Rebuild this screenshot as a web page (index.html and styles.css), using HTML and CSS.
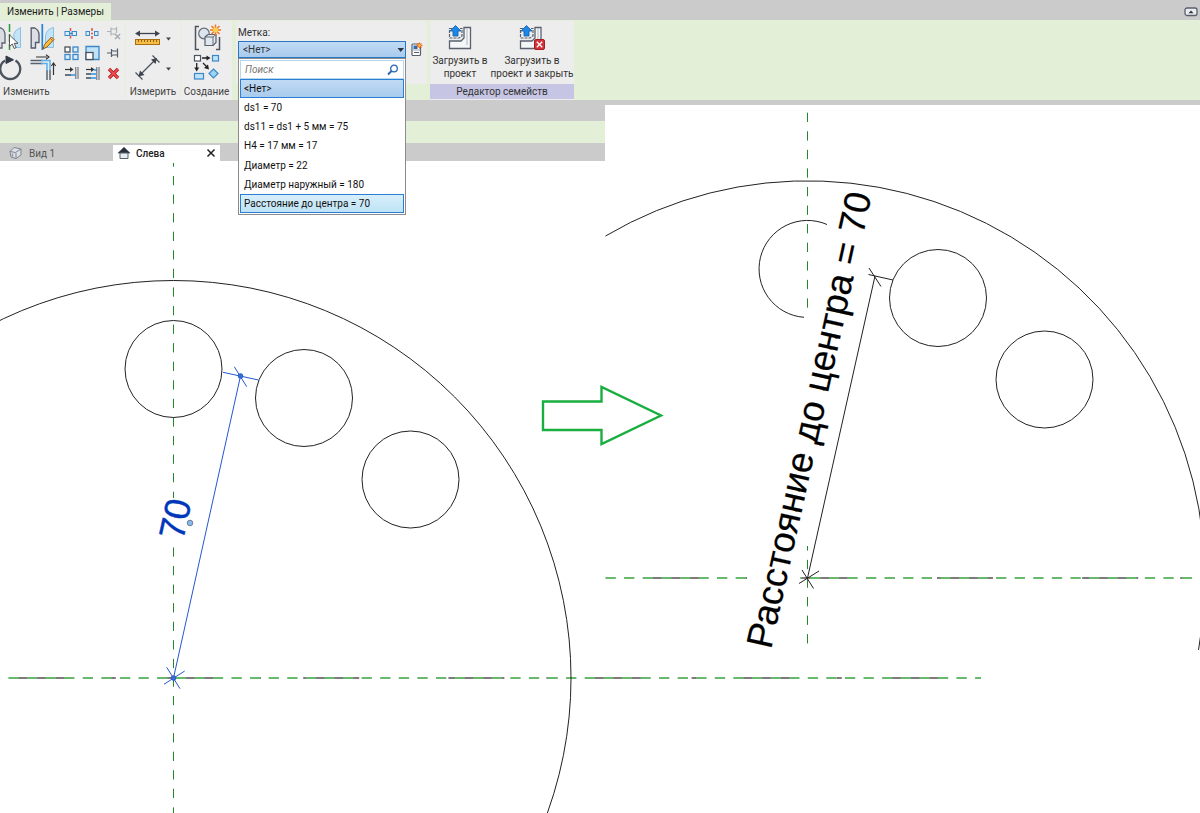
FILE: index.html
```html
<!DOCTYPE html>
<html lang="ru">
<head>
<meta charset="utf-8">
<title>Изменить | Размеры</title>
<link rel="stylesheet" href="styles.css">
</head>
<body>
<header>
  <div class="titlebar">
    <button class="ribbon-tab">Изменить | Размеры</button>
    <button class="collapse" aria-label="Свернуть ленту">
      <svg width="14" height="10" viewBox="0 0 14 10"><rect x="1" y="1" width="12" height="7.500" rx="2" fill="#e9edf2" stroke="#59606b" stroke-width="1.300"/><path d="M4.500 6.200h5L7 3.500z" fill="#333"/></svg>
    </button>
  </div>

  <div class="ribbon">
    <section class="panel modify">
      <div class="tools">
        <div class="big-grid">
          <button class="tool" aria-label="Зеркало по оси"><svg width="28" height="30" viewBox="0 23 28 30">
            <path d="M-3 28h4q4 2 4 7v8H2v5h-5z" fill="#d9dce2" stroke="#5d6572" stroke-width="1.300"/>
            <path d="M20.500 27.500v20h-6v-8l-1-5q2-5 7-7z" fill="#c3e3f7" stroke="#8cc0e6"/>
            <path d="M9.500 24v26" stroke="#2e9b3e" stroke-width="1.500" stroke-dasharray="8 2"/>
            <path d="M9.500 35v11.500l2.700-2.500 2 4.500 2-1-2-4.200h3.800z" fill="#fff" stroke="#444" stroke-width=".9"/></svg></button>
          <button class="tool" aria-label="Зеркало по линии"><svg width="32" height="30" viewBox="28 23 32 30">
            <path d="M31.200 28h3.500q4.300 2 4.300 7v7.500h-3.500v5.500h-4.300z" fill="#dcdfe5" stroke="#535b68" stroke-width="1.300"/>
            <path d="M53.500 27.500v20h-8V36q1-7 8-8.500z" fill="#c3e3f7" stroke="#8cc0e6"/>
            <path d="M42.300 24v26" stroke="#2584d8" stroke-width="1.700"/>
            <path d="M43 49l1.500-4.500 7-7.500 2.500 2.500-7 7.500z" fill="#f8bf3f" stroke="#8a5a18" stroke-width="1"/><path d="M50.300 38.300l2.500 2.500" stroke="#dc4d4d"/></svg></button>
          <button class="tool" aria-label="Повернуть"><svg width="28" height="30" viewBox="0 53 28 30">
            <path d="M15.500 60.500A10 10 0 1 1 5 60.500" fill="none" stroke="#4b535f" stroke-width="2.300"/>
            <path d="M6 56l7.500 3.800L6 63.500z" fill="#333a45" stroke="#333a45"/></svg></button>
          <button class="tool" aria-label="Обрезать до угла"><svg width="32" height="30" viewBox="28 53 32 30">
            <path d="M30.500 60.500h12M30.500 63.500h12M47 70v10M50 70v10" stroke="#59616d" stroke-width="1.500"/>
            <path d="M41 60.500h9v10M41 63.500h6v7" fill="none" stroke="#5aaeea" stroke-width="1.500"/>
            <path d="M36 57h11M53.500 75V63.500" stroke="#333" stroke-width="1.200"/><path d="M46 54.800l3 2.200-3 2.200M51.300 66l2.200-3 2.200 3" fill="none" stroke="#333" stroke-width="1.100"/></svg></button>
        </div>
        <div class="small-grid">
          <button class="tool" aria-label="Разделить элемент"><svg width="21" height="20" viewBox="60 23 21 20"><path d="M70.500 28v3M70.500 35.500v3" stroke="#da5348" stroke-width="1.500"/><rect x="65" y="31.500" width="4.500" height="4" fill="#d9efff" stroke="#3f88c8"/><rect x="72" y="31.500" width="4.500" height="4" fill="#d9efff" stroke="#3f88c8"/><path d="M69 33.500h4" stroke="#3f88c8" stroke-width="1.500"/></svg></button>
          <button class="tool" aria-label="Разделить с зазором"><svg width="21" height="20" viewBox="81 23 21 20"><path d="M92 28v3M92 36v3" stroke="#da5348" stroke-width="1.500"/><circle cx="92" cy="33.500" r="1" fill="#da5348"/><rect x="86" y="31.500" width="3.500" height="4" fill="#d9efff" stroke="#3f88c8"/><rect x="94.500" y="31.500" width="3.500" height="4" fill="#d9efff" stroke="#3f88c8"/></svg></button>
          <button class="tool" aria-label="Открепить"><svg width="21" height="20" viewBox="102 23 21 20"><path d="M107 31.500h4M111 27.500v8M111 29h5M111 34h5M116.500 27v6" fill="none" stroke="#afb2b6" stroke-width="1.200"/><path d="M115 34l5 5M120 34l-5 5" stroke="#a9acb1" stroke-width="1.600"/></svg></button>
          <button class="tool" aria-label="Массив"><svg width="21" height="20" viewBox="60 43 21 20"><g fill="#d7eefb" stroke="#3d88c6" stroke-width="1.300"><rect x="65" y="47" width="5" height="5" fill="#fff" stroke="#4a515c"/><rect x="73" y="47" width="5" height="5"/><rect x="65" y="54.500" width="5" height="5"/><rect x="73" y="54.500" width="5" height="5"/></g></svg></button>
          <button class="tool" aria-label="Масштаб"><svg width="21" height="20" viewBox="81 43 21 20"><path d="M86 46.500h13v13H86z" fill="#bfe3f7" stroke="#3d88c6" stroke-width="1.300"/><rect x="86" y="52.500" width="7" height="7" fill="#fff" stroke="#4a515c" stroke-width="1.300"/></svg></button>
          <button class="tool" aria-label="Закрепить"><svg width="21" height="20" viewBox="102 43 21 20"><path d="M107 53h4M111.500 49v8M111.500 50.500l2 .5h4M111.500 55.500l2-.5h4M117.500 48.500v9" fill="none" stroke="#555d69" stroke-width="1.200"/></svg></button>
          <button class="tool" aria-label="Удлинить один элемент"><svg width="21" height="20" viewBox="60 63 21 20"><path d="M65 69.500h6" stroke="#333" stroke-width="1.200"/><path d="M70 67l3.500 2.500L70 72z" fill="#333"/><path d="M65 75h6" stroke="#69717d" stroke-width="2"/><path d="M71 75h4.500" stroke="#55abea" stroke-width="2"/><path d="M75.800 67v12M78 67v12" stroke="#5c6470" stroke-width="1"/></svg></button>
          <button class="tool" aria-label="Удлинить несколько элементов"><svg width="21" height="20" viewBox="81 63 21 20"><path d="M86 69.500h6" stroke="#333" stroke-width="1.200"/><path d="M91 67l3.500 2.500L91 72z" fill="#333"/><path d="M86 74h6M86 78h6" stroke="#69717d" stroke-width="2"/><path d="M91 74h5M91 78h5M94 70h3" stroke="#55abea" stroke-width="2"/><path d="M96.800 67v13M99 67v13" stroke="#5c6470" stroke-width="1"/></svg></button>
          <button class="tool" aria-label="Удалить"><svg width="21" height="20" viewBox="102 63 21 20"><path d="M109 69l9 9M118 69l-9 9" stroke="#b61f24" stroke-width="3.300"/><path d="M109 69l9 9M118 69l-9 9" stroke="#ef4f50" stroke-width="1.700"/></svg></button>
        </div>
      </div>
      <h2 class="caption left">Изменить</h2>
    </section>

    <section class="panel measure">
      <div class="tools stack">
        <button class="tool" aria-label="Измерить между двумя элементами"><svg width="42" height="30" viewBox="132 23 42 30"><path d="M137 33.500h21" stroke="#3d444f" stroke-width="1.300"/><path d="M140 30.500l-5 3 5 3zM155 30.500l5 3-5 3z" fill="#3d444f"/><rect x="135.500" y="39.500" width="24" height="5" fill="#f6bd45" stroke="#a66d12"/><path d="M138.500 40v2M141.500 40v2M144.500 40v2M147.500 40v2M150.500 40v2M153.500 40v2M156.500 40v2" stroke="#94610f"/><path d="M166 37.500h5l-2.500 3z" fill="#444"/></svg></button>
        <button class="tool" aria-label="Параллельный размер"><svg width="42" height="30" viewBox="132 53 42 30"><path d="M139 76l17-17M135.500 72.500l7 7M152.500 55.500l7 7" stroke="#4b535f" stroke-width="1.300"/><path d="M138.500 76.500l1.500-6 4.500 4.500zM157 58l-1.500 6-4.500-4.500z" fill="#3d444f"/><path d="M166 67.500h5l-2.500 3z" fill="#444"/></svg></button>
      </div>
      <h2 class="caption">Измерить</h2>
    </section>

    <section class="panel create">
      <div class="tools stack">
        <button class="tool" aria-label="Создать группу"><svg width="34" height="30" viewBox="190 23 34 30"><path d="M199 26.500h-3.500v23h3.500M216 49.500h3.500V37" fill="none" stroke="#4b535f" stroke-width="1.500"/><circle cx="204" cy="33.500" r="5.300" fill="#dce5ee" stroke="#626a76" stroke-width="1.200"/><path d="M205 37l3-2.500h8v8l-3 3h-8z" fill="#e0e7ef" stroke="#59616d" stroke-width="1.200"/><path d="M205 37h8v8.500M213 37l3-2.500" fill="none" stroke="#59616d" stroke-width=".9"/><path d="M215.500 24.500v11M210 30h11M211.500 26l8 8M219.500 26l-8 8" stroke="#ee7622" stroke-width="1.500"/><circle cx="215.500" cy="30" r="2.500" fill="#ffd34c"/></svg></button>
        <button class="tool" aria-label="Создать подобные"><svg width="34" height="30" viewBox="190 53 34 30"><rect x="194.500" y="55.500" width="6" height="5.500" fill="#fff" stroke="#4b535f" stroke-width="1.200"/><rect x="212.500" y="55.500" width="6" height="5.500" fill="#bfe3f7" stroke="#3d88c6" stroke-width="1.200"/><path d="M202 58h6M196.700 63v6M203 63l4 4" stroke="#222" stroke-width="1.300"/><path d="M206.500 55.500L210.500 58l-4 2.500zM194.200 67.500h5l-2.500 4zM209 69.500l-1-5-4 3.500z" fill="#222"/><rect x="194.500" y="73.500" width="9" height="5.500" fill="#bfe3f7" stroke="#3d88c6" stroke-width="1.200"/><path d="M213.500 69l4.500 4.500-4.500 4.500-4.500-4.500z" fill="#9fd3f2" stroke="#3d88c6" stroke-width="1.200"/></svg></button>
      </div>
      <h2 class="caption">Создание</h2>
    </section>

    <section class="panel label-panel">
      <label for="label-select">Метка:</label>
      <div class="label-row">
        <div class="combo">
          <select id="label-select"><option>&lt;Нет&gt;</option></select>
          <svg class="chevron" width="8" height="5" viewBox="0 0 8 5"><path d="M.5 0h6.500L3.750 4z" fill="#2d3540"/></svg>
          <div class="popup">
            <div class="search">
              <input type="text" placeholder="Поиск" aria-label="Поиск">
              <svg width="12" height="12" viewBox="0 0 12 12"><circle cx="7" cy="4.500" r="3.300" fill="#fff" stroke="#2b66b5" stroke-width="1.300"/><path d="M4.500 7L1 10.500" stroke="#2b66b5" stroke-width="1.900"/></svg>
            </div>
            <div class="options" role="listbox" aria-label="Метка">
              <button role="option" class="option selected" aria-selected="true">&lt;Нет&gt;</button>
              <button role="option" class="option">ds1 = 70</button>
              <button role="option" class="option">ds11 = ds1 + 5 мм = 75</button>
              <button role="option" class="option">H4 = 17 мм = 17</button>
              <button role="option" class="option">Диаметр = 22</button>
              <button role="option" class="option">Диаметр наружный = 180</button>
              <button role="option" class="option hover">Расстояние до центра = 70</button>
            </div>
          </div>
        </div>
        <button class="tool" aria-label="Создать параметр"><svg width="13" height="16" viewBox="410 42 13 16"><rect x="412" y="44" width="8.500" height="11.500" rx="1" fill="#fff" stroke="#555d69" stroke-width="1.200"/><rect x="413.500" y="45.500" width="4" height="3.500" fill="#2d6db5"/><path d="M414 52.500h5" stroke="#555d69"/><path d="M412.500 50h8" stroke="#9aa0a9"/><path d="M419.500 42.500v6M416.500 45.500h6M417.500 43.500l4 4M421.500 43.500l-4 4" stroke="#ef6a1f" stroke-width="1.100"/><circle cx="419.500" cy="45.500" r="1.200" fill="#ffc53d"/></svg></button>
      </div>
    </section>

    <section class="panel family">
      <div class="tools">
        <button class="load"><svg width="26" height="28" viewBox="447 24 26 28"><path d="M452 29.500h-2.500v9.500h9.500l3-2v-7.500h-2" fill="none" stroke="#59616d" stroke-width="1.200" stroke-dasharray="3 1"/><path d="M464 28.500h6.500v21h-21v-7.500h11.500l3-3z" fill="#f5f6f8" stroke="#59616d" stroke-width="1.300"/><path d="M467 29v17" stroke="#b3b8c0"/><path d="M455.500 26.500l5.500 5.500h-3v5h-5v-5h-3z" fill="#1d87e8" stroke="#0d5cab" stroke-width=".8"/></svg><span>Загрузить в<br>проект</span></button>
        <button class="load wide"><svg width="26" height="28" viewBox="518 24 26 28"><path d="M522 29.500h-2.500v9.500h9.500l3-2v-7.500h-2" fill="none" stroke="#59616d" stroke-width="1.200" stroke-dasharray="3 1"/><path d="M534 28.500h6v21h-20.500v-7.500h11.500l3-3z" fill="#f5f6f8" stroke="#59616d" stroke-width="1.300"/><path d="M537 29v11" stroke="#b3b8c0"/><path d="M525.500 26.500l5.500 5.500h-3v5h-5v-5h-3z" fill="#1d87e8" stroke="#0d5cab" stroke-width=".8"/><rect x="533.500" y="40.500" width="10" height="10" rx="1.500" fill="#d2333a" stroke="#a51b22"/><path d="M535.800 42.800l5.400 5.400M541.200 42.800l-5.400 5.400" stroke="#fff" stroke-width="1.300"/></svg><span>Загрузить в<br>проект и закрыть</span></button>
      </div>
      <h2 class="caption lilac">Редактор семейств</h2>
    </section>
  </div>
</header>

<main class="workspace">
  <svg class="drawing" viewBox="0 105 1200 708" preserveAspectRatio="xMinYMin meet" role="img" aria-label="Чертёж фланца">
    <!-- left view -->
    <g class="axis-v">
      <path d="M173.500 163V498" stroke-dashoffset="5.600"/>
      <path d="M173.500 547.400V813"/>
    </g>
    <path class="axis-grey" d="M12.800 678H981"/>
    <path class="axis-green" d="M0 678H981" stroke-dashoffset="10.200"/>
    <g class="outline">
      <circle cx="173.500" cy="678" r="397.500"/>
      <circle cx="173.500" cy="369" r="48.500"/>
      <circle cx="304" cy="398" r="48.500"/>
      <circle cx="410.500" cy="479.500" r="48.500"/>
    </g>
    <g class="dim-blue">
      <path d="M173.500 678L240.500 376M223 372.300L258.500 380M234.300 366.700L246.700 386.700M166.700 667.300L180 688.700M164 684.300L184.700 671"/>
      <circle cx="240.500" cy="376" r="2.300"/>
      <circle cx="173.500" cy="678" r="2.300"/>
    </g>
    <text class="dim-text blue" transform="translate(183 541) rotate(-77.500)">70</text>
    <circle class="grip" cx="190" cy="523" r="2.800"/>

    <!-- right view -->
    <g class="axis-v">
      <path d="M807.500 112.700V308"/>
      <path d="M807.500 546V644" stroke-dashoffset="4.700"/>
    </g>
    <path class="axis-grey" d="M605.500 578H747" stroke-dashoffset="104"/>
    <path class="axis-green" d="M605.500 578H747"/>
    <path class="axis-grey" d="M800.500 578H1192" stroke-dashoffset="8.700"/>
    <path class="axis-green" d="M800.500 578H1192" stroke-dashoffset="8.900"/>
    <g class="outline">
      <path d="M605.500 236A397.500 397.500 0 0 1 1198.500 650"/>
      <path d="M827 224.500A48.500 48.500 0 1 0 804 317.300"/>
      <circle cx="938" cy="298" r="48.500"/>
      <circle cx="1044.500" cy="379.500" r="48.500"/>
      <path d="M807.500 578L875 276M868.500 274.500L893 280M869 268L881 286.500M802 570L813.500 588.500M799 583.500L819 571"/>
    </g>
    <text class="dim-text" transform="translate(771 650) rotate(-77.500)">Расстояние до центра = 70</text>

    <path class="arrow" d="M543 401.500H601.500V387L661 415.500L601.500 444V430H543z"/>
  </svg>

  <div class="view-chrome">
    <div class="options-bar"></div>
    <nav class="view-tabs">
      <button class="view-tab"><svg width="14" height="14" viewBox="0 0 14 14"><path d="M1 5.500L5 1.500l7 1.500v6l-5 3.500-5-1.500z" fill="#dde1e5" stroke="#7e858e"/><path d="M1 5.500l5.500 1 5.500-3.500M7 7v5" fill="none" stroke="#7e858e"/><path d="M3.500 7.500v3" stroke="#9299a2" stroke-width="1.500"/></svg>Вид 1</button>
      <div class="view-tab active"><svg width="14" height="14" viewBox="0 0 14 14"><path d="M7 1L.5 7.200h13z" fill="#29313d"/><path d="M3 7h8v5.500H3z" fill="#e8edf2" stroke="#57606c"/></svg><span>Слева</span><button class="close" aria-label="Закрыть"><svg width="10" height="10" viewBox="0 0 10 10"><path d="M1.500 1.500l7 7M8.500 1.500l-7 7" stroke="#222" stroke-width="1.500"/></svg></button></div>
    </nav>
  </div>
</main>
</body>
</html>
```
FILE: styles.css
```css
* { box-sizing: border-box; }

body {
  margin: 0;
  min-height: 100vh;
  display: flex;
  flex-direction: column;
  background: #fff;
  color: #333;
  font: 10px/13px Roboto, "Noto Sans", sans-serif;
  overflow-x: hidden;
}

button, input, select {
  font: inherit;
  color: inherit;
  margin: 0;
  padding: 0;
  border: 0;
  background: none;
}

svg { display: block; }

.titlebar {
  height: 20px;
  display: flex;
  align-items: flex-end;
  justify-content: space-between;
  background: #cbcbcb;
}
.ribbon-tab {
  height: 17px;
  padding: 0 7px;
  background: #e4efd7;
  color: #222;
}
.collapse { padding: 0 2px 3px 0; }

.ribbon {
  position: relative;
  z-index: 2;
  display: flex;
  padding-top: 1px;
  height: 85px;
  background: #e4efd7;
  border-bottom: 5px solid #cbcbcb;
}
.panel {
  display: flex;
  flex-direction: column;
  background: #ededed;
  border-right: 1px solid #e4efd7;
}
.tools { display: flex; height: 63px; padding-top: 2px; }
.tools.stack { flex-direction: column; align-items: center; }
.tool { display: block; }
.caption {
  margin: 0;
  height: 15px;
  font-size: 10px;
  line-height: 15px;
  font-weight: 400;
  text-align: center;
  color: #444;
}
.caption.left { text-align: left; padding-left: 3px; }
.caption.lilac { background: #c6c6e4; color: #333; }

.modify { width: 126px; }
.big-grid { display: grid; grid-template-columns: 28px 32px; grid-auto-rows: 30px; }
.small-grid { display: grid; grid-template-columns: repeat(3, 21px); grid-auto-rows: 20px; }
.measure { width: 55px; }
.create { width: 52px; }

.label-panel {
  width: 192px;
  height: 63px;
  margin: 0 2px 0 3px;
  padding: 5px 2px 0;
}
.label-row { display: flex; align-items: center; gap: 4px; margin-top: 2px; }
.combo { position: relative; width: 168px; }
.combo select {
  display: block;
  appearance: none;
  width: 100%;
  height: 17px;
  padding-left: 4px;
  border: 1px solid #2a78c4;
  background: linear-gradient(#c0daf4, #a9cbed);
}
.chevron { position: absolute; right: 1px; top: 7px; }
.popup {
  position: absolute;
  top: 17px;
  left: 0;
  width: 100%;
  padding: 1px;
  background: #fff;
  border: 1px solid #8c8c8c;
}
.search {
  display: flex;
  align-items: center;
  height: 19px;
  padding: 0 4px;
  border: 1px solid #b5d8ee;
}
.search input { flex: 1; min-width: 0; outline: 0; font-style: italic; }
.search input::placeholder { color: #777; opacity: 1; }
.options { display: flex; flex-direction: column; height: 134px; }
.option {
  flex: 1;
  padding: 0 3px;
  border: 1px solid transparent;
  text-align: left;
  white-space: nowrap;
  color: #111;
}
.option.selected { background: linear-gradient(#c0daf4, #a9cbed); border-color: #2a7fd4; }
.option.hover { background: linear-gradient(#d8effa, #bfe3f6); border-color: #2a7fd4; }

.family { width: 145px; }
.load {
  width: 60px;
  display: flex;
  flex-direction: column;
  align-items: center;
  gap: 3px;
  white-space: nowrap;
}
.load.wide { width: 84px; }

.workspace { position: relative; flex: 1; }
.drawing { width: 100%; height: auto; }

.view-chrome {
  position: absolute;
  top: 0;
  left: 0;
  width: 50.42%;
  padding-top: 16px;
  background: #cbcbcb;
}
.options-bar { height: 22px; background: #e4efd7; }
.view-tabs { display: flex; align-items: flex-end; height: 18px; }
.view-tab {
  display: flex;
  align-items: center;
  gap: 6px;
  width: 113px;
  height: 16px;
  padding: 0 9px;
  color: #555;
}
.view-tab.active {
  width: 107px;
  padding: 0 4px;
  gap: 5px;
  background: #fff;
  color: #222;
  font-weight: 500;
}
.close { margin-left: auto; }

.axis-v path { stroke: #22882a; stroke-width: 1; stroke-dasharray: 9.300 9.270; }
.axis-grey { stroke: #807a80; stroke-width: 2; stroke-dasharray: 56 42 5 42.200; }
.axis-green { stroke: #68b96b; stroke-width: 2; stroke-dasharray: 10.300 8.290; }
.outline { fill: none; stroke: #222; stroke-width: 1; }
.dim-blue { stroke: #2458cf; stroke-width: 1; fill: #3c6fd0; }
.grip { fill: #86b9f2; stroke: #71808f; stroke-width: 1; }
.dim-text { font: 37px "Liberation Sans", Arial, sans-serif; fill: #000; stroke: #000; stroke-width: .2px; }
.dim-text.blue { font-size: 36px; fill: #0037b8; stroke: #0037b8; stroke-width: .4px; }
.arrow { fill: none; stroke: #1aae40; stroke-width: 2.400; }
```
